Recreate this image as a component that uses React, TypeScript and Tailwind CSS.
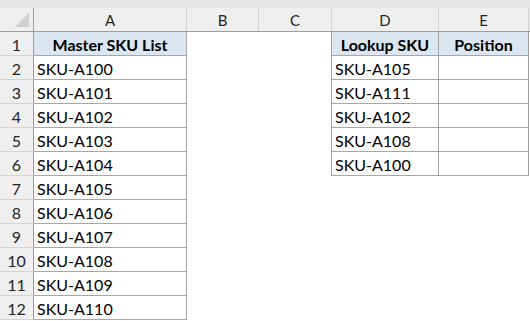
import React from 'react';

// column widths include the 1px right border of each cell
const cols = [
    { key: 'A', w: 'w-[153px]' },
    { key: 'B', w: 'w-[72px]' },
    { key: 'C', w: 'w-[73px]' },
    { key: 'D', w: 'w-[107px]' },
    { key: 'E', w: 'w-[90px]' },
];

const master = ['SKU-A100', 'SKU-A101', 'SKU-A102', 'SKU-A103', 'SKU-A104', 'SKU-A105', 'SKU-A106', 'SKU-A107', 'SKU-A108', 'SKU-A109', 'SKU-A110'];
const lookup = ['SKU-A105', 'SKU-A111', 'SKU-A102', 'SKU-A108', 'SKU-A100'];

function Cell({ w, text, head, bordered, rightLine }: { w: string; text?: string; head?: boolean; bordered?: boolean; rightLine?: boolean }) {
    return (
        <div
            className={[
                'h-full shrink-0 flex items-center pt-[2px] text-[16px] text-black',
                w,
                bordered ? 'border-r border-b border-[#a6a6a6]' : rightLine ? 'border-r border-[#a6a6a6]' : '',
                head ? 'bg-[#dce6f1] font-bold justify-center' : 'pl-[3px]',
            ].join(' ')}
        >
            {text}
        </div>
    );
}

export default function App() {
    const rows = Array.from({ length: 12 }, (_, i) => i + 1);

    return (
        <div className="w-[530px] h-[321px] bg-white overflow-hidden" style={{ fontFamily: 'Lato, "Noto Sans", sans-serif' }}>
            {/* ribbon strip */}
            <div className="h-[8px] bg-[#e6e6e6]" />

            {/* column headers */}
            <div className="flex h-[24px] bg-[#efefef] border-b border-[#9e9e9e]">
                <div className="relative w-[34px] shrink-0 border-r border-[#9e9e9e]">
                    <svg className="absolute left-0 top-0" width="33" height="23" viewBox="0 0 33 23">
                        <polygon points="15,19 29,19 29,5" fill="#cfcfcf" />
                    </svg>
                </div>
                {cols.map((c) => (
                    <div key={c.key} className={`${c.w} shrink-0 flex items-center justify-center pt-[1px] border-r border-[#d4d4d4] text-[15px] text-[#262626]`}>
                        {c.key}
                    </div>
                ))}
            </div>

            {/* data rows */}
            {rows.map((r) => {
                const a = r === 1 ? 'Master SKU List' : master[r - 2];
                const inLookup = r <= 6;
                return (
                    <div key={r} className="flex h-[24px]">
                        <div className="w-[34px] shrink-0 h-full flex items-center justify-center pt-[2px] bg-[#efefef] border-r border-b border-r-[#9e9e9e] border-b-[#d4d4d4] text-[16px] text-[#262626]">
                            {r}
                        </div>
                        <Cell w="w-[153px]" text={a} head={r === 1} bordered />
                        <Cell w="w-[72px]" />
                        <Cell w="w-[73px]" rightLine={inLookup} />
                        {inLookup ? (
                            <>
                                <Cell w="w-[107px]" text={r === 1 ? 'Lookup SKU' : lookup[r - 2]} head={r === 1} bordered />
                                <Cell w="w-[90px]" text={r === 1 ? 'Position' : ''} head={r === 1} bordered />
                            </>
                        ) : (
                            <>
                                <Cell w="w-[107px]" />
                                <Cell w="w-[90px]" />
                            </>
                        )}
                    </div>
                );
            })}
        </div>
    );
}
